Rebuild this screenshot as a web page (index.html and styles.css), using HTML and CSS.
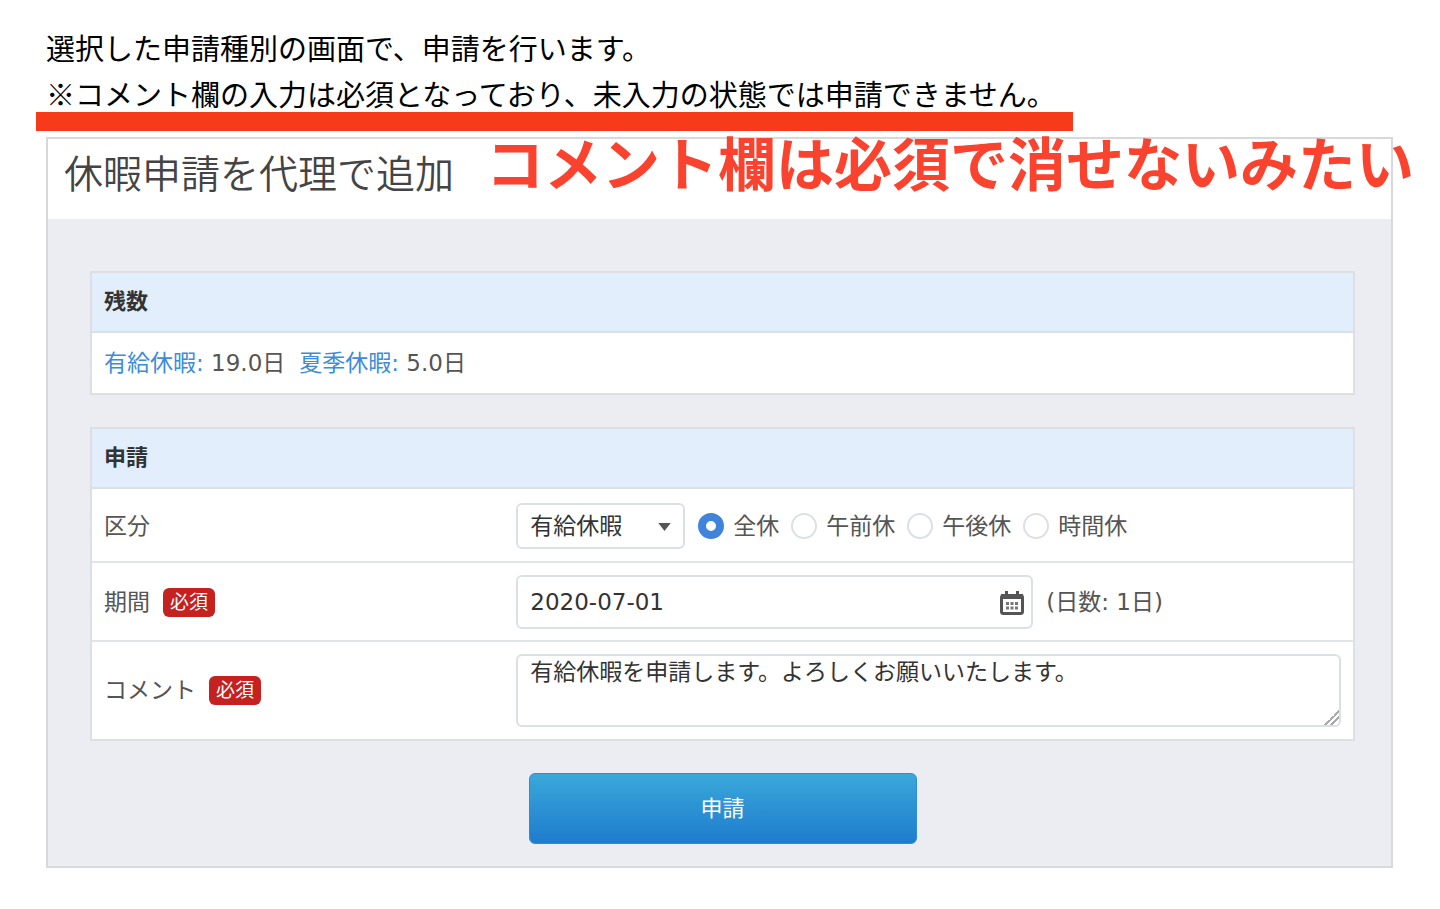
FILE: index.html
```
<!DOCTYPE html>
<html lang="ja">
<head>
  <meta charset="UTF-8">
  <title>休暇申請を代理で追加</title>
  <link rel="stylesheet" href="styles.css">
</head>
<body>

<!-- Intro -->
<div class="intro">
  <p>選択した申請種別の画面で、申請を行います。</p>
  <p>※コメント欄の入力は必須となっており、未入力の状態では申請できません。</p>
  <div class="underline"></div>
</div>

<!-- Request screen -->
<div class="screen">
  <div class="screen-header">
    <h1>休暇申請を代理で追加</h1>
    <div class="note">コメント欄は必須で消せないみたい</div>
  </div>

  <form class="screen-body">
    <section class="panel">
      <h2>残数</h2>
      <div class="balance">
        <span><a href="#">有給休暇:</a> 19.0日</span>
        <span><a href="#">夏季休暇:</a> 5.0日</span>
      </div>
    </section>

    <section class="panel">
      <h2>申請</h2>
      <div class="row row-type">
        <label for="type">区分</label>
        <div class="field">
          <div class="select-box">
            <select id="type">
              <option>有給休暇</option>
            </select>
            <svg class="caret" viewBox="0 0 14 9" aria-hidden="true"><path d="M0 0h14L7 9z" fill="#555"/></svg>
          </div>
          <div class="radios">
            <label><input type="radio" name="unit" checked>全休</label>
            <label><input type="radio" name="unit">午前休</label>
            <label><input type="radio" name="unit">午後休</label>
            <label><input type="radio" name="unit">時間休</label>
          </div>
        </div>
      </div>
      <div class="row row-date">
        <label for="date">期間<span class="required">必須</span></label>
        <div class="field">
          <div class="date-box">
            <input type="text" id="date" value="2020-07-01">
            <svg class="calendar" viewBox="0 0 24 24" aria-hidden="true">
              <rect x="1.5" y="4.5" width="21" height="18" rx="2" fill="#fff" stroke="#555" stroke-width="3"/>
              <path d="M1 3h22v5H1zM5 0h3v4H5zM16 0h3v4h-3z" fill="#555"/>
              <path d="M6 11h3v3H6zM10.500 11h3v3h-3zM15 11h3v3h-3zM6 15.500h3v3H6zM10.500 15.500h3v3h-3zM15 15.500h3v3h-3z" fill="#777"/>
            </svg>
          </div>
          <span class="days">(日数: 1日)</span>
        </div>
      </div>
      <div class="row row-comment">
        <label for="comment">コメント<span class="required">必須</span></label>
        <textarea id="comment">有給休暇を申請します。よろしくお願いいたします。</textarea>
      </div>
    </section>

    <button type="button" class="submit">申請</button>
  </form>
</div>

</body>
</html>
```

FILE: styles.css
```
* {
  box-sizing: border-box;
}
body {
  margin: 0;
  padding: 24px 47px 40px 46px;
  font-family: 'DejaVu Sans', 'Noto Sans CJK JP', sans-serif;
  font-size: 23px;
  color: #555;
  background: #fff;
}
p, h1, h2 {
  margin: 0;
}
.intro {
  font-family: 'Noto Sans CJK JP', sans-serif;
  font-size: 29px;
  line-height: 46px;
  color: #000;
}
.underline {
  width: 77%;
  height: 19px;
  margin: -4px 0 6px -10px;
  background: #f63a1a;
}
.screen {
  border: 2px solid #d8d9da;
  background: #fff;
}
.screen-header {
  position: relative;
  padding: 4px 16px 20px;
}
h1 {
  font-family: 'Noto Sans CJK JP', sans-serif;
  font-size: 39px;
  font-weight: 350;
  line-height: 56px;
  color: #444;
}
.note {
  position: absolute;
  top: -14px;
  left: 438px;
  font-family: 'Noto Sans CJK JP', sans-serif;
  font-size: 58px;
  font-weight: 700;
  line-height: 72px;
  white-space: nowrap;
  color: #f9432f;
}
.screen-body {
  padding: 52px 36px 22px 42px;
  background: #ecedf2;
}
.panel {
  margin-bottom: 32px;
  border: 2px solid #dce0e5;
  background: #fff;
}
.panel h2 {
  padding: 0 12px;
  font-size: 22px;
  font-weight: 700;
  line-height: 58px;
  color: #333;
  background: #e2eefb;
  border-bottom: 2px solid #dce0e5;
}
.balance {
  display: flex;
  gap: 14px;
  padding: 0 12px;
  line-height: 60px;
}
.balance a {
  color: #3c8cd6;
  text-decoration: none;
}
.row {
  display: grid;
  grid-template-columns: 1fr 2fr;
  align-items: center;
  padding: 12px;
}
.row-type {
  padding-top: 14px;
}
.row + .row {
  border-top: 2px solid #e1e4e8;
}
.row > label {
  display: flex;
  align-items: center;
  gap: 13px;
  line-height: 29px;
}
.required {
  padding: 0 7px;
  border-radius: 6px;
  font-size: 19px;
  line-height: 29px;
  color: #fff;
  background: #c4211f;
}
.field {
  display: flex;
  align-items: center;
  gap: 13px;
}
select, input[type="text"], textarea {
  border: 2px solid #dce0e4;
  border-radius: 6px;
  font-family: inherit;
  font-size: 23px;
  color: #333;
  background: #fff;
}
.select-box, .date-box {
  position: relative;
}
select {
  appearance: none;
  display: block;
  width: 169px;
  height: 46px;
  padding: 0 12px;
}
.caret {
  position: absolute;
  top: 20px;
  right: 14px;
  width: 13px;
  height: 8px;
}
.radios {
  display: flex;
  gap: 12px;
  line-height: 29px;
}
.radios label {
  display: flex;
  align-items: center;
  gap: 9px;
}
input[type="radio"] {
  appearance: none;
  width: 26px;
  height: 26px;
  margin: 0;
  border: 2px solid #dde0e4;
  border-radius: 50%;
  background: #fff;
}
input[type="radio"]:checked {
  border: 8px solid #3f83db;
}
.row-date {
  padding-bottom: 11px;
}
.days {
  line-height: 29px;
}
.date-box {
  width: 517px;
}
input[type="text"] {
  display: block;
  width: 100%;
  height: 54px;
  padding: 0 50px 0 12px;
}
.calendar {
  position: absolute;
  top: 16px;
  right: 9px;
  width: 24px;
  height: 24px;
}
textarea {
  display: block;
  width: 100%;
  height: 73px;
  padding: 0 12px;
  line-height: 32px;
}
textarea::-webkit-resizer {
  background: linear-gradient(135deg, transparent 50%, #aaa 50%, #aaa 58%, transparent 58%, transparent 70%, #aaa 70%, #aaa 78%, transparent 78%);
}
.submit {
  display: block;
  width: 388px;
  height: 71px;
  margin: 0 auto;
  padding-bottom: 6px;
  border: 1px solid #2f8ed0;
  border-radius: 6px;
  font-family: inherit;
  font-size: 22px;
  color: #fff;
  background: linear-gradient(#3aa8da, #1e7ccd);
  cursor: pointer;
}
```
